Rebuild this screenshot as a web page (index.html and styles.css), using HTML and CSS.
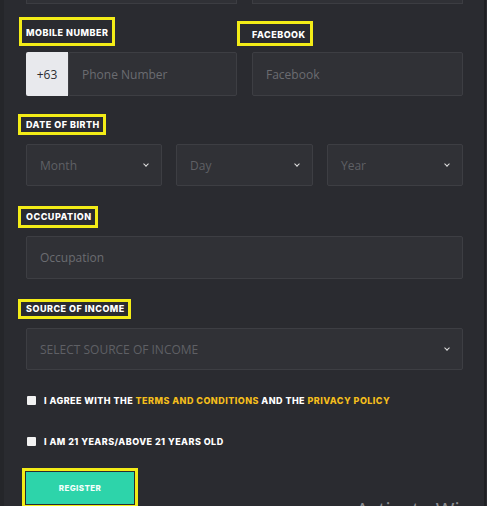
FILE: index.html
```html
<!DOCTYPE html>
<html lang="en">
<head>
    <meta charset="UTF-8">
    <meta name="viewport" content="width=device-width, initial-scale=1.0">
    <title>Register</title>
    <link rel="stylesheet" href="styles.css">
</head>
<body>
    <div class="page">
        <form class="form">
            <div class="row two">
                <div class="stub"></div>
                <div class="stub"></div>
            </div>

            <div class="row two labels">
                <div><span class="label label-mobile">MOBILE NUMBER</span></div>
                <div><span class="label label-fb">FACEBOOK</span></div>
            </div>
            <div class="row two">
                <div class="phone">
                    <span class="prefix">+63</span>
                    <input type="text" class="field" placeholder="Phone Number">
                </div>
                <input type="text" class="field" placeholder="Facebook">
            </div>

            <span class="label label-dob">DATE OF BIRTH</span>
            <div class="row three">
                <div class="select">Month</div>
                <div class="select">Day</div>
                <div class="select">Year</div>
            </div>

            <span class="label label-occ">OCCUPATION</span>
            <input type="text" class="field wide" placeholder="Occupation">

            <span class="label label-src">SOURCE OF INCOME</span>
            <div class="select wide">SELECT SOURCE OF INCOME</div>

            <label class="check first">
                <input type="checkbox">
                <span>I AGREE WITH THE <b>TERMS AND CONDITIONS</b> AND THE <b>PRIVACY POLICY</b></span>
            </label>
            <label class="check">
                <input type="checkbox">
                <span>I AM 21 YEARS/ABOVE 21 YEARS OLD</span>
            </label>

            <div class="register-wrap">
                <button type="button" class="register">REGISTER</button>
            </div>
        </form>
        <div class="watermark">Activate Win</div>
    </div>
</body>
</html>
```

FILE: styles.css
```css
body {
    margin: 0;
    background: #2a2b30;
    font-family: "Open Sans", "Noto Sans", sans-serif;
    overflow: hidden;
}
.page {
    position: relative;
    height: 506px;
    border-left: 4px solid #25262a;
    border-right: 2px solid #1f2023;
    box-sizing: border-box;
    width: 486px;
    overflow: hidden;
}
.form {
    padding: 0 20px 0 18px;
    display: flex;
    flex-direction: column;
    align-items: flex-start;
}
.row {
    display: grid;
    width: 437px;
    margin-left: 4px;
}
.two {
    grid-template-columns: 211px 211px;
    column-gap: 15px;
}
.three {
    grid-template-columns: 136px 137px 136px;
    column-gap: 14px;
}
.stub {
    height: 3px;
    border: 1px solid #3c3d42;
    border-top: none;
    background: #303136;
}
.labels {
    margin-left: -3px;
    width: 444px;
    grid-template-columns: 203px 226px;
    margin-top: 13px;
    height: 29px;
    align-items: end;
}
.label {
    display: inline-block;
    border: 3px solid #f3ec17;
    color: #fff;
    font-family: "Inter", "Noto Sans", sans-serif;
    font-weight: 800;
    font-size: 9px;
    letter-spacing: 0.5px;
    line-height: 10px;
}
.label-mobile {
    padding: 8px 4px 5px 4px;
}
.label-fb {
    padding: 6px 4px 3px 12px;
}
.label-dob {
    margin-top: 18px;
    margin-left: -4px;
    padding: 3px 3px 2px 5px;
}
.label-occ {
    margin-top: 20px;
    margin-left: -4px;
    padding: 3px 3px 3px 5px;
}
.label-src {
    margin-top: 20px;
    margin-left: -4px;
    padding: 2px 3px 2px 5px;
}
.labels + .row {
    margin-top: 6px;
}
.phone {
    display: flex;
}
.prefix {
    width: 42px;
    flex: none;
    background: #e8e9ed;
    color: #2c2d31;
    font-size: 12px;
    display: flex;
    align-items: center;
    justify-content: center;
    border-radius: 2px 0 0 2px;
}
.field {
    height: 44px;
    box-sizing: border-box;
    background: #303136;
    border: 1px solid #3d3e43;
    border-radius: 2px;
    padding: 0 13px;
    font-family: "Open Sans", "Noto Sans", sans-serif;
    font-size: 12px;
    color: #ddd;
    outline: none;
    width: 100%;
    min-width: 0;
}
.field::placeholder {
    color: #6b6c71;
}
.wide {
    width: 437px;
    margin-left: 4px;
    height: 43px;
    margin-top: 8px;
}
.label-dob + .row {
    margin-top: 9px;
}
.select {
    height: 42px;
    box-sizing: border-box;
    background: #303136;
    border: 1px solid #3d3e43;
    border-radius: 2px;
    padding: 0 13px 0 13px;
    font-size: 12px;
    color: #5f6065;
    display: flex;
    align-items: center;
    justify-content: space-between;
}
.select::after {
    content: "";
    width: 3px;
    height: 3px;
    border-right: 1.2px solid #e0e0e0;
    border-bottom: 1.2px solid #e0e0e0;
    transform: rotate(45deg);
    margin-top: -3px;
}
.select.wide {
    margin-top: 9px;
}
.check {
    display: flex;
    align-items: center;
    margin-left: 5px;
    font-family: "Inter", "Noto Sans", sans-serif;
    font-weight: 800;
    font-size: 9px;
    letter-spacing: 0.45px;
    color: #fff;
    margin-top: 30px;
}
.check.first {
    margin-top: 25px;
}
.check input {
    appearance: none;
    width: 9px;
    height: 9px;
    margin: 0 8px 0 0;
    background: #f2f2f2;
    border-radius: 1px;
}
.check b {
    color: #f4be1c;
    font-weight: 800;
}
.register-wrap {
    margin-top: 21px;
    border: 3px solid #f3ec17;
    padding: 1px;
}
.register {
    width: 108px;
    height: 32px;
    background: #2dd4aa;
    border: none;
    color: #f4fffb;
    font-family: "Inter", "Noto Sans", sans-serif;
    font-weight: 800;
    font-size: 8px;
    letter-spacing: 0.4px;
    display: block;
}
.watermark {
    position: absolute;
    left: 352px;
    top: 496px;
    font-family: "Noto Sans", sans-serif;
    font-size: 20px;
    color: #8c8d91;
    white-space: nowrap;
}
```
